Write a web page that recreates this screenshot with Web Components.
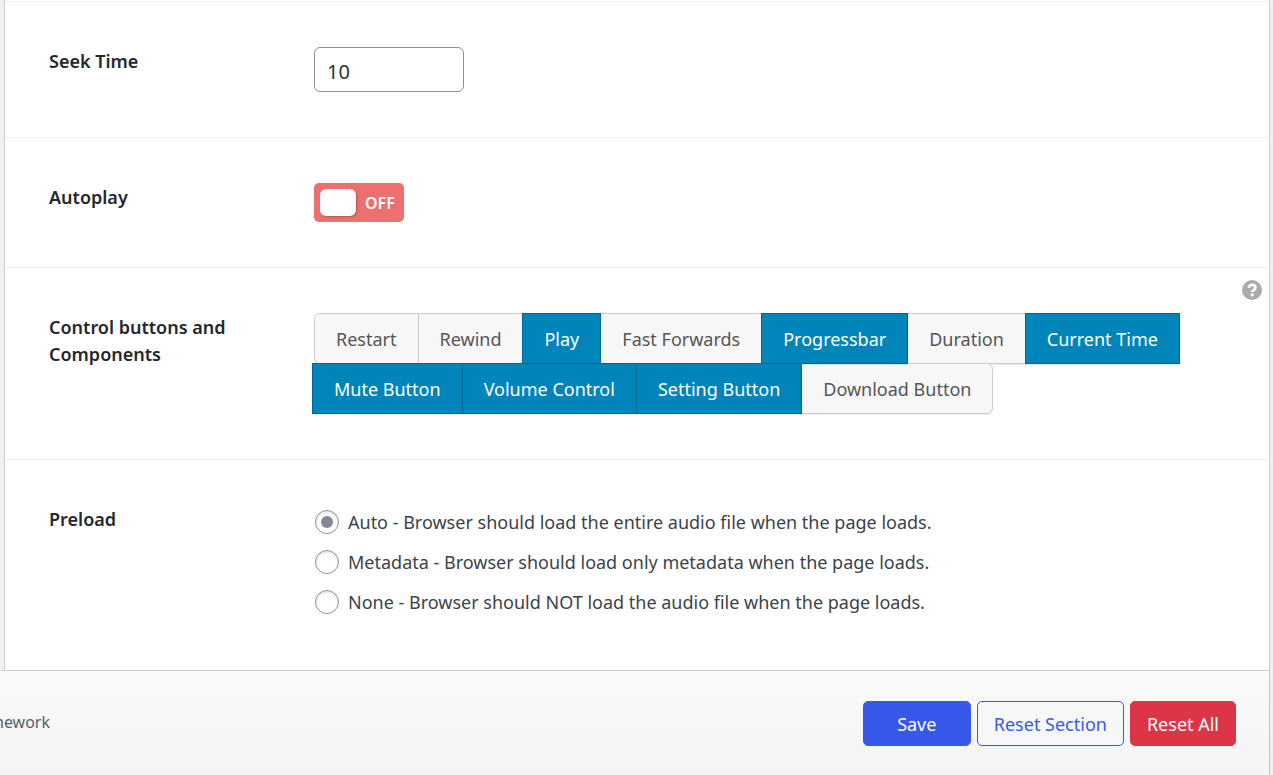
<!DOCTYPE html>
<html lang="en">
<head>
<meta charset="utf-8">
<title>Player settings</title>
<style>
  body {
    margin: 0;
    background: #f0f0f1;
    color: #3c434a;
    font: 18px/27px "Noto Sans", "Open Sans", sans-serif;
  }
</style>
</head>
<body>
<settings-page></settings-page>

<script>
const define = (name, html, setup) => {
  const template = document.createElement('template');
  template.innerHTML = html;
  customElements.define(name, class extends HTMLElement {
    constructor() {
      super();
      this.attachShadow({ mode: 'open' }).append(template.content.cloneNode(true));
    }
    connectedCallback() { if (setup) setup(this, this.shadowRoot); }
  });
};

/* One row: title on the left, control on the right, optional help icon */
define('setting-row', `
  <style>
    :host {
      display: grid;
      grid-template-columns: 235px minmax(0, 1fr);
      column-gap: 30px;
      align-items: start;
      padding: 45px 44px;
      border-top: 1px solid #eee;
      position: relative;
    }
    .title { padding-top: 1px; color: #23282d; font-weight: 600; }
    .control { display: flex; }
    .help { position: absolute; top: 12px; right: 7px; line-height: 0; }
  </style>
  <div class="title"><slot name="title"></slot></div>
  <div class="control"><slot></slot></div>
  <div class="help"><slot name="help"></slot></div>
`);

define('toggle-switch', `
  <style>
    :host { display: block; }
    label {
      display: flex;
      align-items: center;
      gap: 9px;
      box-sizing: border-box;
      width: 90px;
      height: 39px;
      padding: 0 6px;
      border-radius: 5px;
      background: #ed6f6f;
      color: #fff;
      font-size: 16px;
      font-weight: 600;
      cursor: pointer;
    }
    input {
      appearance: none;
      margin: 0;
      flex: none;
      width: 36px;
      height: 27px;
      border-radius: 6px;
      background: #fff;
      box-shadow: 1px 1px 2px rgba(0, 0, 0, .25);
    }
    span { padding-top: 1px; }
  </style>
  <label><input type="checkbox" role="switch"><span>OFF</span></label>
`, (host, root) => root.querySelector('input').setAttribute('aria-description', host.getAttribute('name')));

define('set-button', `
  <style>
    :host { display: block; margin-left: -1px; margin-bottom: -1px; }
    button {
      display: block;
      box-sizing: border-box;
      height: 51px;
      padding: 2px 21px 0;
      border: 1px solid #ccc;
      border-radius: 0;
      background: #f7f7f7;
      color: #555;
      font: inherit;
      box-shadow: 0 1px 0 rgba(0, 0, 0, .08);
      cursor: pointer;
    }
    :host([active]) { position: relative; }
    :host([active]) button { background: #0085ba; border-color: #006799; color: #fff; }
    :host(:first-child) button { border-radius: 6px 0 0 6px; }
    :host(:first-child) { margin-left: 1px; }
    :host(:last-child) button { border-radius: 0 6px 6px 0; }
  </style>
  <button type="button"><slot></slot></button>
`, (host, root) => root.querySelector('button').setAttribute('aria-pressed', host.hasAttribute('active')));

define('button-set', `
  <style>
    :host { display: flex; flex-wrap: wrap; margin-left: -1px; padding-bottom: 1px; }
  </style>
  <slot></slot>
`);

define('radio-list', `
  <style>
    :host { display: flex; flex-direction: column; gap: 6px; padding: 0 0 6px 1px; }
    label { display: flex; align-items: center; gap: 9px; line-height: 34px; }
    input {
      appearance: none;
      display: grid;
      place-items: center;
      box-sizing: border-box;
      flex: none;
      width: 24px;
      height: 24px;
      margin: 0;
      border: 1px solid #8c8f94;
      border-radius: 50%;
      background: #fff;
      box-shadow: inset 0 2px 3px rgba(0, 0, 0, .1);
    }
    input:checked::before {
      content: "";
      width: 12px;
      height: 12px;
      border-radius: 50%;
      background: #7e8993;
    }
  </style>
  <label><input type="radio" name="preload" checked>Auto - Browser should load the entire audio file when the page loads.</label>
  <label><input type="radio" name="preload">Metadata - Browser should load only metadata when the page loads.</label>
  <label><input type="radio" name="preload">None - Browser should NOT load the audio file when the page loads.</label>
`);

define('help-icon', `
  <style>:host { display: block; } svg { display: block; }</style>
  <svg width="20" height="20" viewBox="0 0 20 20" role="img" aria-label="Help">
    <circle cx="10" cy="10" r="10" fill="#aaa"/>
    <path d="M6.700 7.600C7.200 5.700 8.300 4.800 10.100 4.800c1.900 0 3.300 1.100 3.300 2.800 0 1.300-.7 1.900-1.600 2.500-.9.600-1.600.9-1.600 2" fill="none" stroke="#fff" stroke-width="2.800"/>
    <circle cx="10.200" cy="14.900" r="1.700" fill="#fff"/>
  </svg>
`);

define('action-button', `
  <style>
    :host { display: block; }
    button {
      display: block;
      box-sizing: border-box;
      min-width: var(--w, 0);
      height: 45px;
      padding: 2px 16px 0;
      border: 1px solid #3858e9;
      border-radius: 5px;
      background: #3858e9;
      color: #fff;
      font: inherit;
      cursor: pointer;
    }
    :host([kind="outline"]) button { background: #f6f7f7; color: #3858e9; }
    :host([kind="danger"]) button { background: #dc3545; border-color: #dc3545; }
  </style>
  <button type="button"><slot></slot></button>
`);

define('settings-footer', `
  <style>
    :host {
      display: flex;
      flex: 1;
      align-items: flex-start;
      justify-content: space-between;
      padding: 30px 33px 29px 0;
      border-top: 1px solid #c9cdd2;
      border-right: 1px solid #c3c4c7;
      margin-right: 3px;
      background: linear-gradient(#fafafa, #f4f4f4);
    }
    .credit {
      display: flex;
      justify-content: flex-end;
      width: 50px;
      overflow: hidden;
      color: #555d66;
      font-size: 16px;
      line-height: 42px;
    }
    .actions { display: flex; gap: 6px; }
  </style>
  <div class="credit"><span>mework</span></div>
  <div class="actions"><slot></slot></div>
`);

define('settings-page', `
  <style>
    :host { display: flex; flex-direction: column; min-height: 100vh; }
    main {
      margin: 0 3px 0 4px;
      padding-top: 1px;
      border: solid #c9cdd2;
      border-width: 0 1px;
      background: #fff;
    }
    #seek {
      box-sizing: border-box;
      width: 150px;
      height: 45px;
      padding: 4px 12px 0;
      border: 1px solid #8c8f94;
      border-radius: 6px;
      background: #fff;
      color: #2c3338;
      font: inherit;
      font-size: 20px;
    }
  </style>
  <main>
    <setting-row>
      <label slot="title" for="seek">Seek Time</label>
      <input id="seek" type="text" inputmode="numeric" value="10">
    </setting-row>
    <setting-row>
      <span slot="title">Autoplay</span>
      <toggle-switch name="Autoplay"></toggle-switch>
    </setting-row>
    <setting-row>
      <span slot="title">Control buttons and Components</span>
      <help-icon slot="help"></help-icon>
      <button-set>
        <set-button>Restart</set-button>
        <set-button>Rewind</set-button>
        <set-button active>Play</set-button>
        <set-button>Fast Forwards</set-button>
        <set-button active>Progressbar</set-button>
        <set-button>Duration</set-button>
        <set-button active>Current Time</set-button>
        <set-button active>Mute Button</set-button>
        <set-button active>Volume Control</set-button>
        <set-button active>Setting Button</set-button>
        <set-button>Download Button</set-button>
      </button-set>
    </setting-row>
    <setting-row>
      <span slot="title">Preload</span>
      <radio-list></radio-list>
    </setting-row>
  </main>
  <settings-footer>
    <action-button style="--w:108px">Save</action-button>
    <action-button kind="outline">Reset Section</action-button>
    <action-button kind="danger">Reset All</action-button>
  </settings-footer>
`);
</script>
</body>
</html>
